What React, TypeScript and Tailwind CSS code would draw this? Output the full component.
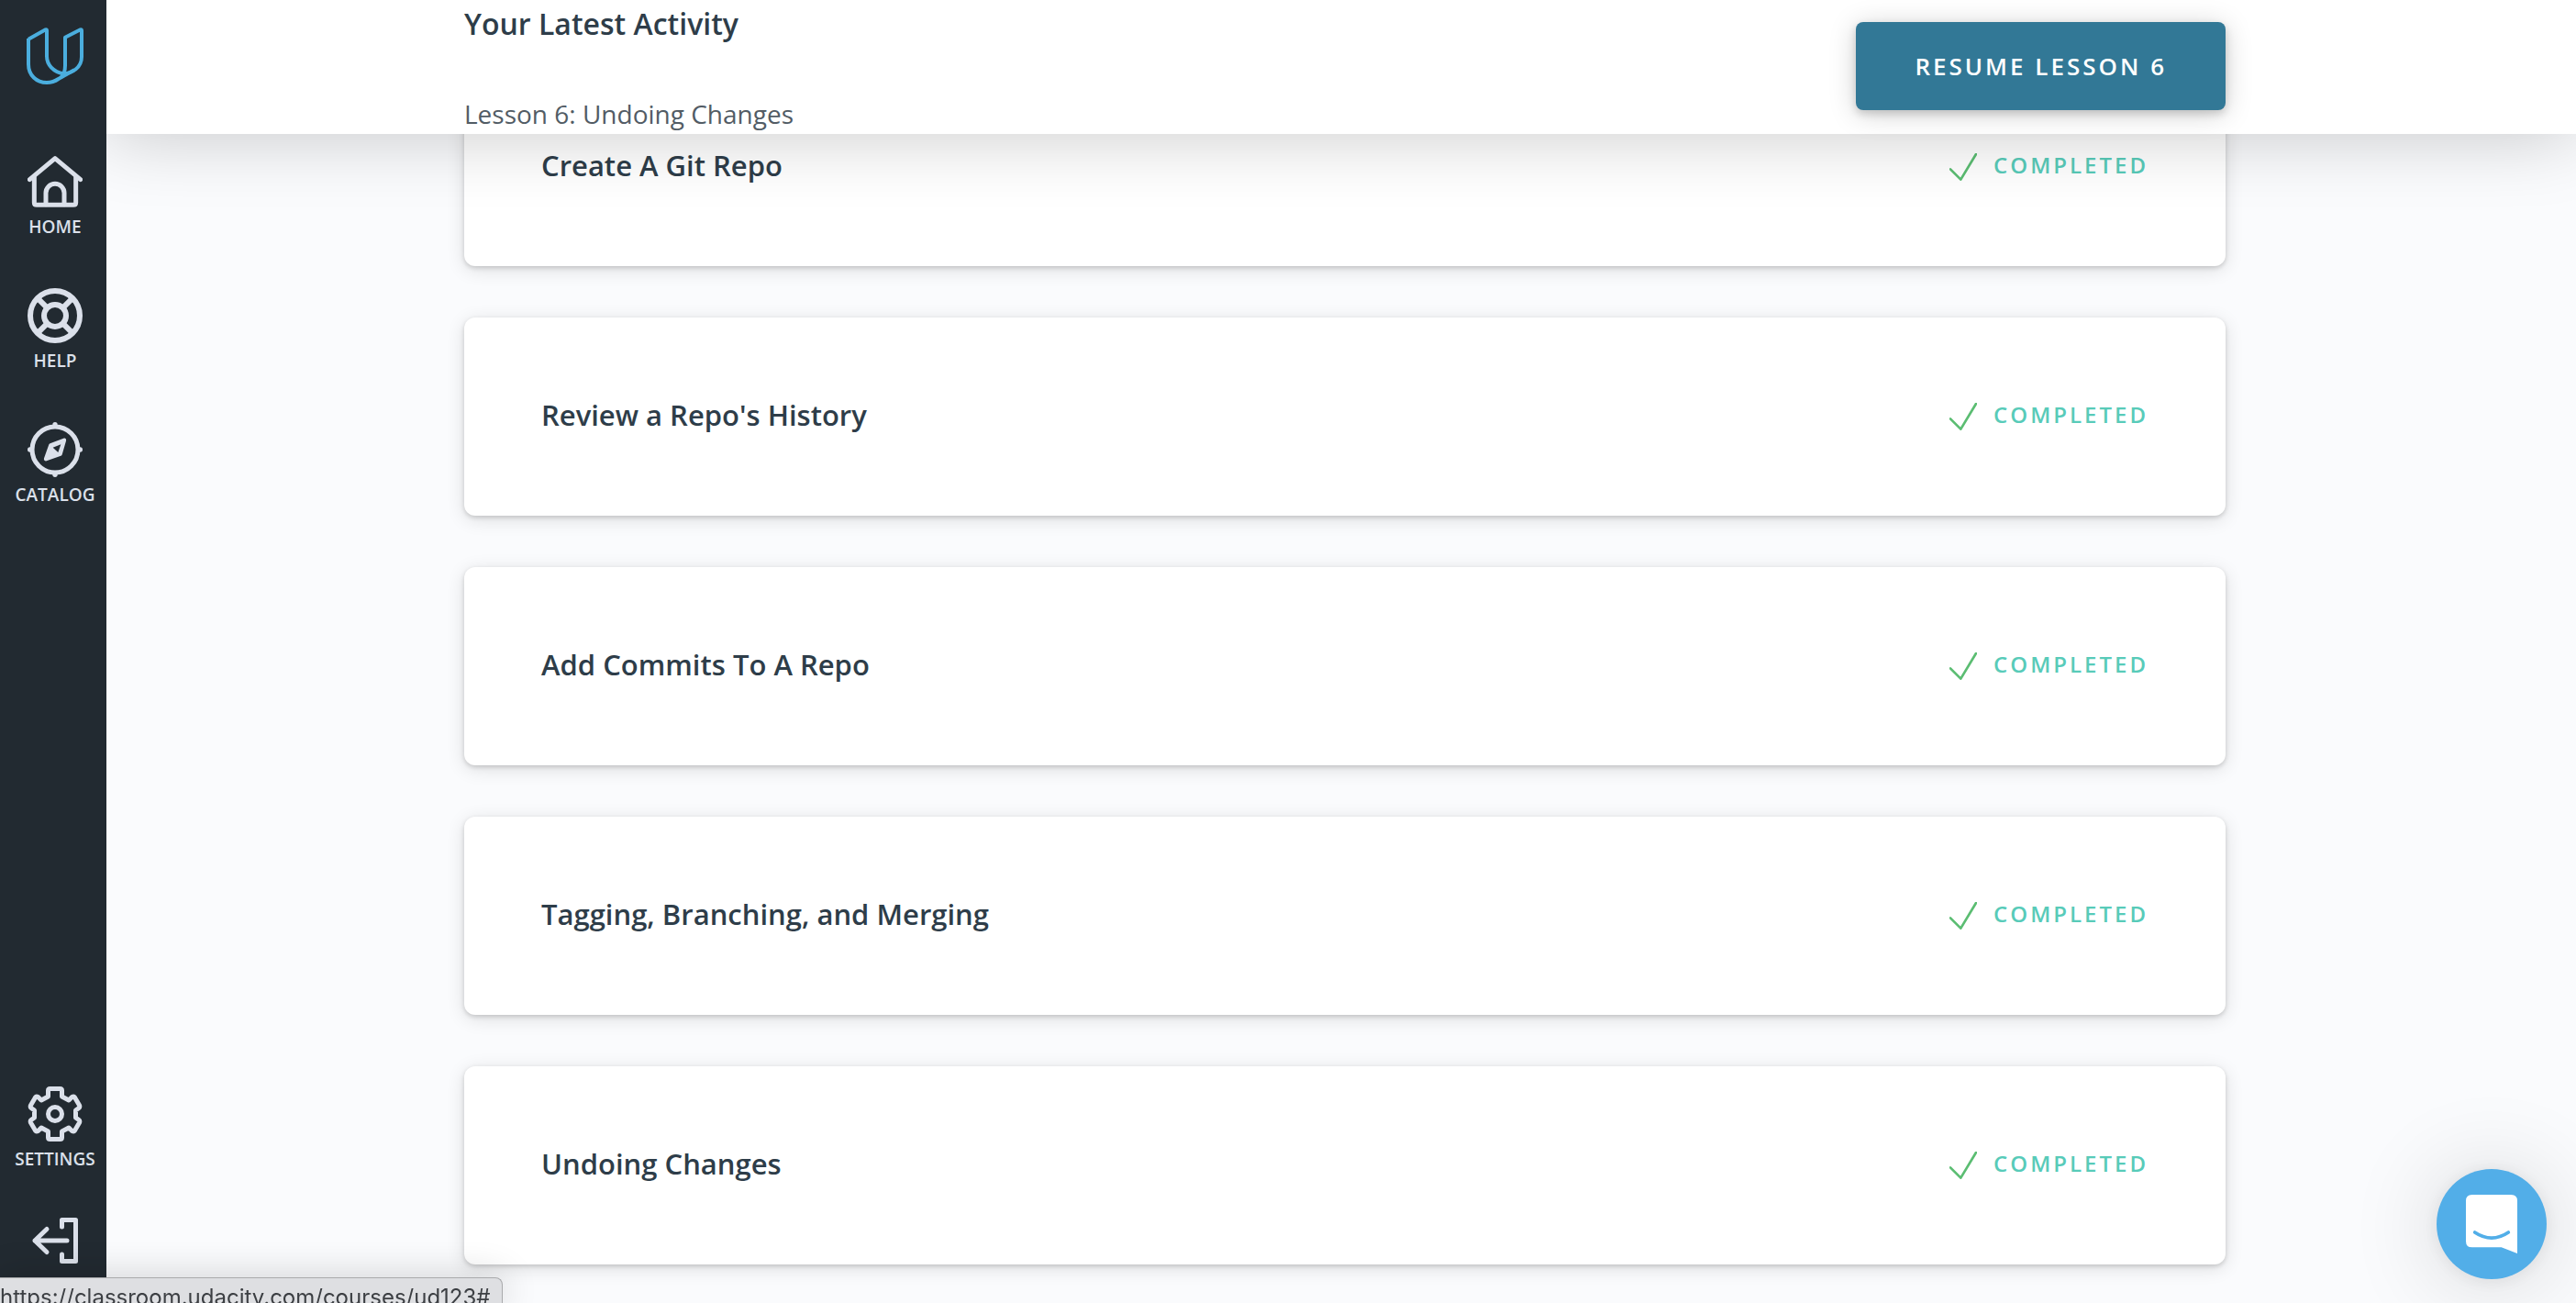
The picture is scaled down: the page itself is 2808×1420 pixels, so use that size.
import React from "react";

function Logo() {
  return (
    <svg viewBox="84 90 186 186" className="size-[62px]" fill="none" stroke="#4baede" strokeWidth="12" strokeLinejoin="round">
      <path d="M90 128 L146 97 Q150 95 150 100 V184 C150 212 172 236 204 241 C232 240 264 222 264 186 V100 Q264 95 260 97 L210 122 V214 C210 236 204 246 197 252" />
      <path d="M90 126 V210 C90 246 116 270 150 270 C166 270 178 265 188 258 L240 229" />
    </svg>
  );
}

function HomeIcon() {
  return (
    <svg viewBox="90 504 180 180" className="size-[60px]" fill="none" stroke="#dbe0ea" strokeWidth="15" strokeLinecap="round" strokeLinejoin="round">
      <path d="M97 587 L180 518 L263 587" />
      <path d="M112 580 V662 Q112 670 120 670 H240 Q248 670 248 662 V580" />
      <path d="M150 668 V631 a30 30 0 0 1 60 0 V668" />
    </svg>
  );
}

function HelpIcon() {
  return (
    <svg viewBox="90 72 180 180" className="size-[60px]" fill="none" stroke="#dbe0ea" strokeWidth="18">
      <circle cx="180" cy="162" r="81" />
      <circle cx="180" cy="162" r="36" />
      <path d="M124 106 L154 136 M236 106 L206 136 M124 218 L154 188 M236 218 L206 188" />
    </svg>
  );
}

function CatalogIcon() {
  return (
    <svg viewBox="90 510 180 180" className="size-[60px]" fill="#dbe0ea">
      <circle cx="180" cy="600" r="75" fill="none" stroke="#dbe0ea" strokeWidth="15" />
      <circle cx="180" cy="518" r="8" />
      <circle cx="180" cy="682" r="8" />
      <circle cx="98" cy="600" r="8" />
      <circle cx="262" cy="600" r="8" />
      <path d="M210 569 L166 586 L150 631 L197 614 Z" stroke="#dbe0ea" strokeWidth="13" strokeLinejoin="round" />
      <path d="M173 593 L199 583 L190 609 Z" fill="#222a31" />
    </svg>
  );
}

function SettingsIcon() {
  return (
    <svg viewBox="0 0 60 60" className="size-[60px]" fill="none" stroke="#dbe0ea" strokeWidth="5" strokeLinejoin="round">
      <path d="M22.5 11 V4.5 Q22.5 2.5 24.5 2.5 H35.5 Q37.5 2.5 37.5 4.5 V11 L45 15 L48.500 11.500 Q50.500 10.500 51.500 12 L56.500 20.500 Q57.300 22.500 56 23.500 L52.500 26 V34 L56 36.500 Q57.300 37.500 56.500 39.500 L51.500 48 Q50.500 49.500 48.500 48.500 L45 45 L37.5 49 V55.500 Q37.5 57.500 35.5 57.500 H24.5 Q22.5 57.500 22.5 55.500 V49 L15 45 L11.500 48.500 Q9.500 49.500 8.500 48 L3.500 39.500 Q2.700 37.500 4 36.500 L7.500 34 V26 L4 23.500 Q2.700 22.500 3.500 20.500 L8.500 12 Q9.500 10.500 11.500 11.500 L15 15 Z" />
      <circle cx="30" cy="30" r="7.5" />
    </svg>
  );
}

function LogoutIcon() {
  return (
    <svg viewBox="0 0 60 60" className="size-[60px]" fill="none" stroke="#dbe0ea" strokeWidth="5" strokeLinecap="round" strokeLinejoin="round">
      <path d="M8 30 H43 M21 17.500 L8 30 L21 42.500" />
      <path d="M37.500 15 V7.500 H52.500 V52.500 H37.500 V45" />
    </svg>
  );
}

function NavItem({ label, children }: { label: string; children: React.ReactNode }) {
  return (
    <a href="#" className="flex flex-col items-center gap-[5px]">
      {children}
      <span className="text-[19px] leading-7 font-semibold text-[#dbe0ea]">{label}</span>
    </a>
  );
}

function LessonCard({ title }: { title: string }) {
  return (
    <li className="flex h-[216px] items-center justify-between rounded-xl bg-white px-[84px] pb-1 shadow-[0_4px_20px_rgba(0,0,0,0.12),0_2px_5px_rgba(0,0,0,0.16)]">
      <h2 className="text-[31px] leading-[44px] font-semibold text-[#2e3d49]">{title}</h2>
      <div className="flex items-end gap-[18px]">
        <svg viewBox="135 117 90 90" className="size-[30px]" fill="none" stroke="#5bbd72" strokeWidth="8" strokeLinecap="round" strokeLinejoin="round">
          <path d="M138 169 L172 203 L222 120" />
        </svg>
        <span className="text-[24px] leading-[34px] font-semibold tracking-[3px] text-[#58cbb9]">COMPLETED</span>
      </div>
    </li>
  );
}

const lessons = [
  "Create A Git Repo",
  "Review a Repo's History",
  "Add Commits To A Repo",
  "Tagging, Branching, and Merging",
  "Undoing Changes",
];

export default function App() {
  return (
    <div className="flex h-screen overflow-hidden bg-[#fafbfd] font-['Open_Sans',sans-serif]">
      <nav className="z-20 flex w-[116px] shrink-0 flex-col items-center bg-[#222a31] pt-[30px] pb-[38px] pl-1">
        <a href="#" aria-label="Udacity">
          <Logo />
        </a>
        <div className="mt-[76px] flex flex-col gap-[53px]">
          <NavItem label="HOME">
            <HomeIcon />
          </NavItem>
          <NavItem label="HELP">
            <HelpIcon />
          </NavItem>
          <NavItem label="CATALOG">
            <CatalogIcon />
          </NavItem>
        </div>
        <div className="mt-auto flex flex-col items-center gap-[45px]">
          <NavItem label="SETTINGS">
            <SettingsIcon />
          </NavItem>
          <a href="#" aria-label="Log out">
            <LogoutIcon />
          </a>
        </div>
      </nav>

      <div className="min-w-0 flex-1">
        <header className="relative z-10 bg-white pl-2 shadow-[0_0_80px_rgba(0,0,0,0.22)]">
          <div className="mx-auto flex max-w-[1920px] items-start justify-between pt-1 pb-0.5">
            <div className="flex flex-col gap-14">
              <h1 className="text-[32px] leading-[44px] font-semibold text-[#2e3d49]">Your Latest Activity</h1>
              <p className="text-[28px] leading-10 font-normal text-[#525c65]">Lesson 6: Undoing Changes</p>
            </div>
            <button className="mt-5 h-24 rounded-lg bg-[#327896] px-16 text-[26px] font-semibold tracking-[3px] text-white shadow-[0_4px_30px_rgba(0,0,0,0.18),0_4px_10px_rgba(0,0,0,0.16)]">
              RESUME LESSON 6
            </button>
          </div>
        </header>
        <main className="-mt-[72px] pl-2">
          <ul className="mx-auto flex max-w-[1920px] flex-col gap-14">
            {lessons.map((t) => (
              <LessonCard key={t} title={t} />
            ))}
          </ul>
        </main>
      </div>

      <button aria-label="Open chat" className="fixed right-8 bottom-[26px] z-20 size-[120px] rounded-full bg-[#52aee8] shadow-[0_4px_100px_rgba(0,0,0,0.16),0_2px_20px_rgba(0,0,0,0.08)]">
        <svg viewBox="168 102 360 360" className="size-full">
          <path d="M284 186 H412 Q432 186 432 206 V378 L380 358 H284 Q264 358 264 338 V206 Q264 186 284 186 Z" fill="#fff" />
          <path d="M293 309 Q348 346 403 309" fill="none" stroke="#52aee8" strokeWidth="11" strokeLinecap="round" />
        </svg>
      </button>

      <div className="fixed bottom-0 left-0 z-30 h-7 rounded-tr-lg border-t border-r border-[#a9aaac] bg-[#dedfe2] pt-[5px] pr-3 font-['Inter',sans-serif] text-[24px] leading-8 text-[#3c3f43] shadow-[0_0_40px_rgba(0,0,0,0.2)]">
        https://classroom.udacity.com/courses/ud123#
      </div>
    </div>
  );
}
